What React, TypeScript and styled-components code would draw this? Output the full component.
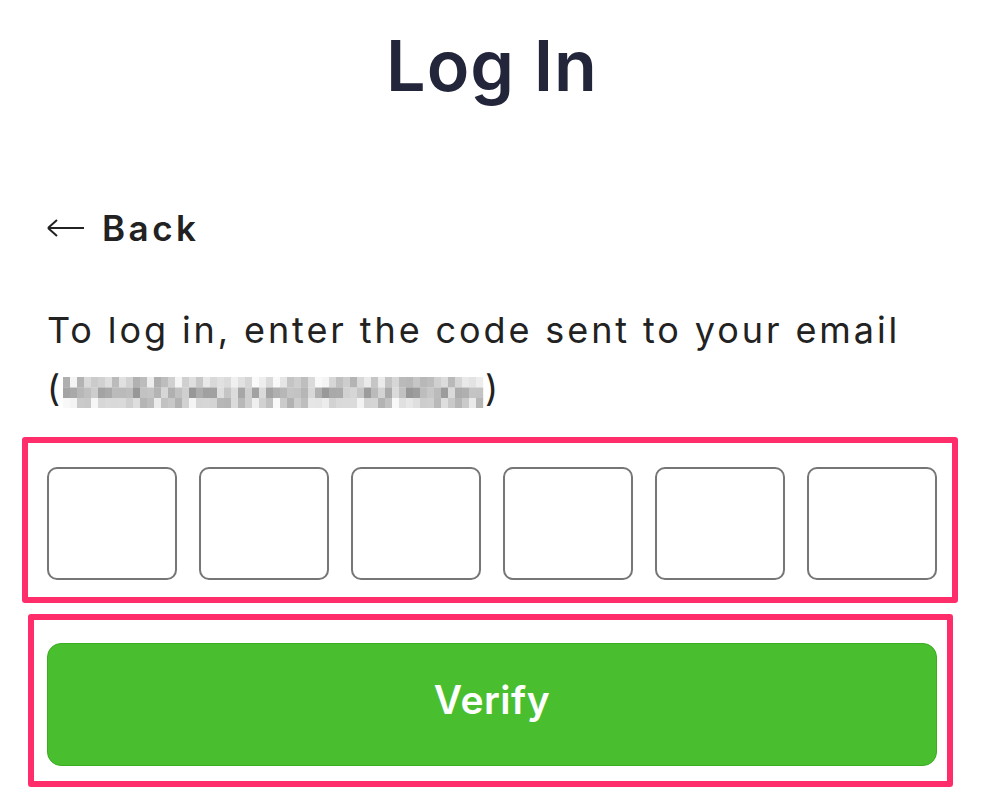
import styled, { createGlobalStyle } from "styled-components";

const GlobalStyle = createGlobalStyle`
  html, body {
    margin: 0;
    padding: 0;
    background: #ffffff;
  }
  body {
    font-family: Inter, "Liberation Sans", sans-serif;
  }
`;

// 페이지 전체
const Page = styled.div`
  width: 994px;
  height: 810px;
  box-sizing: border-box;
  padding: 24px 57px 0 47px;
  display: flex;
  flex-direction: column;
  overflow: hidden;
`;

const Title = styled.h1`
  margin: 0;
  font-size: 70px;
  line-height: 84px;
  font-weight: 600;
  color: #23253b;
  text-align: center;
  letter-spacing: 1px;
`;

const BackLink = styled.a`
  margin-top: 99px;
  display: flex;
  align-items: center;
  gap: 18px;
  font-size: 35px;
  line-height: 42px;
  font-weight: 600;
  color: #222222;
  letter-spacing: 3.5px;
  cursor: pointer;
`;

const Description = styled.p`
  margin: 52px 0 0;
  font-size: 36px;
  line-height: 58px;
  font-weight: 400;
  color: #222222;
  letter-spacing: 2.9px;
  white-space: nowrap;
`;

const Blurred = styled.svg`
  display: inline-block;
  vertical-align: -7px;
`;

// 빨간 강조 박스를 위한 래퍼
const Marked = styled.div<{ $top: number }>`
  position: relative;
  margin-top: ${(p) => p.$top}px;
`;

const Highlight = styled.div<{ $t: number; $r: number; $b: number; $l: number }>`
  position: absolute;
  top: ${(p) => -p.$t}px;
  right: ${(p) => -p.$r}px;
  bottom: ${(p) => -p.$b}px;
  left: ${(p) => -p.$l}px;
  border: 6.5px solid #ff2d6a;
  border-radius: 3px;
  pointer-events: none;
`;

const CodeRow = styled.div`
  display: grid;
  grid-template-columns: repeat(6, 1fr);
  column-gap: 21.5px;
`;

const CodeBox = styled.input`
  box-sizing: border-box;
  width: 100%;
  height: 113px;
  border: 2px solid #767676;
  border-radius: 10px;
  background: #ffffff;
  font-size: 40px;
  text-align: center;
  outline: none;
`;

const VerifyButton = styled.button`
  width: 100%;
  height: 123px;
  padding: 0 0 10px;
  border: 1px solid #3aae22;
  border-radius: 14px;
  background: #49bf2f;
  color: #ffffff;
  font-family: Inter, "Liberation Sans", sans-serif;
  font-size: 39px;
  font-weight: 600;
  letter-spacing: 0.5px;
  cursor: pointer;
`;

const BackArrow = () => (
  <svg width="37" height="22" viewBox="0 0 37 22">
    <path d="M1 11 H37 M1 11 L10 3 M1 11 L10 19" stroke="#222" strokeWidth="2" fill="none" />
  </svg>
);

const PixelEmail = () => {
  const cols = 60;
  const rows = 3;
  const cells = [];
  for (let r = 0; r < rows; r++) {
    for (let c = 0; c < cols; c++) {
      const n = Math.abs(Math.sin(c * 12.9898 + r * 78.233) * 43758.5453) % 1;
      const base = r === 1 ? 150 : 175;
      const g = Math.round(base + n * 75);
      cells.push(
        <rect key={`${r}-${c}`} x={c * 7} y={r * 10.5} width="7.2" height="10.7" fill={`rgb(${g},${g},${g})`} />
      );
    }
  }
  return (
    <Blurred width="422" height="31" viewBox="0 0 422 31">
      {cells}
    </Blurred>
  );
};

export default function App() {
  return (
    <>
      <GlobalStyle />
      <Page>
        <Title>Log In</Title>
        <BackLink>
          <BackArrow />
          Back
        </BackLink>
        <Description>
          To log in, enter the code sent to your email
          <br />(
          <PixelEmail />)
        </Description>
        <Marked $top={50}>
          <CodeRow>
            {Array.from({ length: 6 }).map((_, i) => (
              <CodeBox key={i} maxLength={1} />
            ))}
          </CodeRow>
          <Highlight $t={30} $r={21} $b={23} $l={25} />
        </Marked>
        <Marked $top={63}>
          <VerifyButton>Verify</VerifyButton>
          <Highlight $t={29} $r={16} $b={21} $l={19} />
        </Marked>
      </Page>
    </>
  );
}
